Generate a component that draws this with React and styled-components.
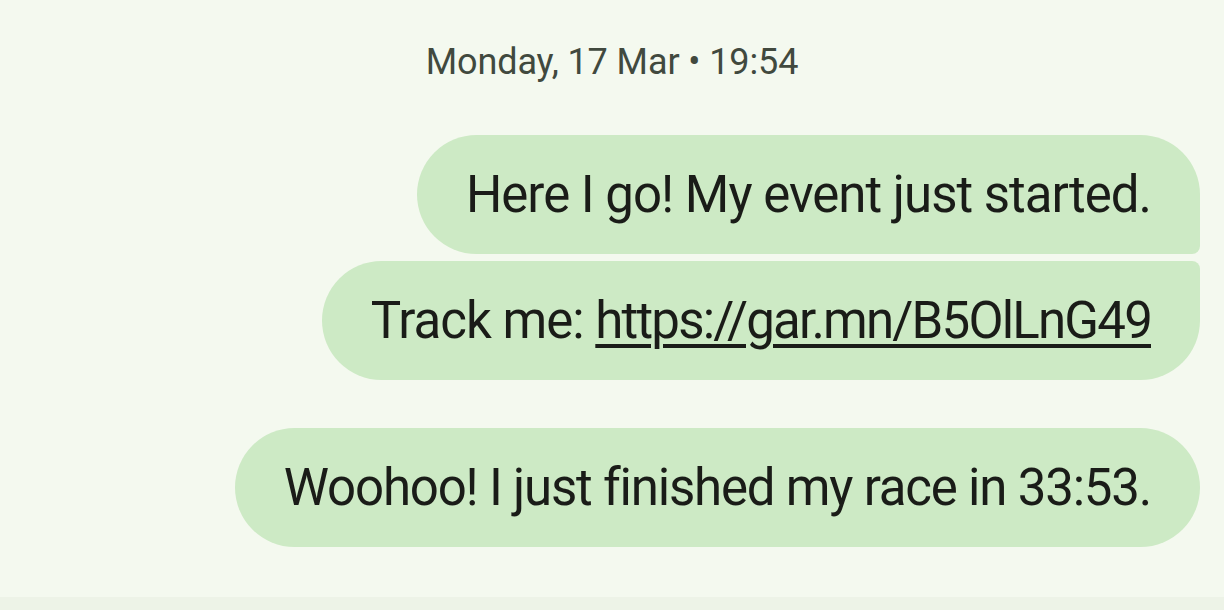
import React from "react";
import styled, { createGlobalStyle } from "styled-components";

const GlobalStyle = createGlobalStyle`
  html, body {
    margin: 0;
    padding: 0;
    background: #f4f9ef;
  }
  body {
    font-family: Roboto, "Noto Sans", "Liberation Sans", sans-serif;
    -webkit-font-smoothing: antialiased;
  }
`;

const Screen = styled.div`
  width: 1224px;
  height: 610px;
  display: flex;
  flex-direction: column;
  background: #f4f9ef;
  overflow: hidden;
`;

const Thread = styled.div`
  height: 597px;
  display: flex;
  flex-direction: column;
  align-items: flex-end;
  padding: 0 24px 0 0;
  box-sizing: border-box;
`;

const Stamp = styled.div`
  align-self: center;
  margin: 40px 0 0 24px;
  font-size: 36px;
  line-height: 44px;
  color: #41493e;
  letter-spacing: -0.1px;
`;

// grouped messages: the corner next to the neighbour bubble stays tight
const radius = (tail) => {
  if (tail === "bottom") return "60px 60px 8px 60px";
  if (tail === "top") return "60px 8px 60px 60px";
  return "60px";
};

const Bubble = styled.div`
  height: 119px;
  margin-top: ${(p) => p.$gap}px;
  padding: 0 49px;
  display: flex;
  align-items: center;
  box-sizing: border-box;
  background: #cdeac5;
  border-radius: ${(p) => radius(p.$tail)};
  color: #1a1c18;
  font-size: 51px;
  letter-spacing: ${(p) => p.$spacing ?? -1}px;
  white-space: nowrap;
`;

const Link = styled.span`
  letter-spacing: -1.8px;
  text-decoration: underline;
  text-decoration-thickness: 4px;
  text-underline-offset: 6px;
`;

const Footer = styled.div`
  flex: 1;
  background: #edf3e7;
`;

export default function App() {
  return (
    <>
      <GlobalStyle />
      <Screen>
        <Thread>
          <Stamp>Monday, 17 Mar • 19:54</Stamp>
          <Bubble $tail="bottom" $gap={51}>
            Here I go! My event just started.
          </Bubble>
          <Bubble $tail="top" $gap={7}>
            Track me:&nbsp;<Link>https://gar.mn/B5OlLnG49</Link>
          </Bubble>
          <Bubble $gap={48} $spacing={-1.2}>
            Woohoo! I just finished my race in 33:53.
          </Bubble>
        </Thread>
        <Footer />
      </Screen>
    </>
  );
}
